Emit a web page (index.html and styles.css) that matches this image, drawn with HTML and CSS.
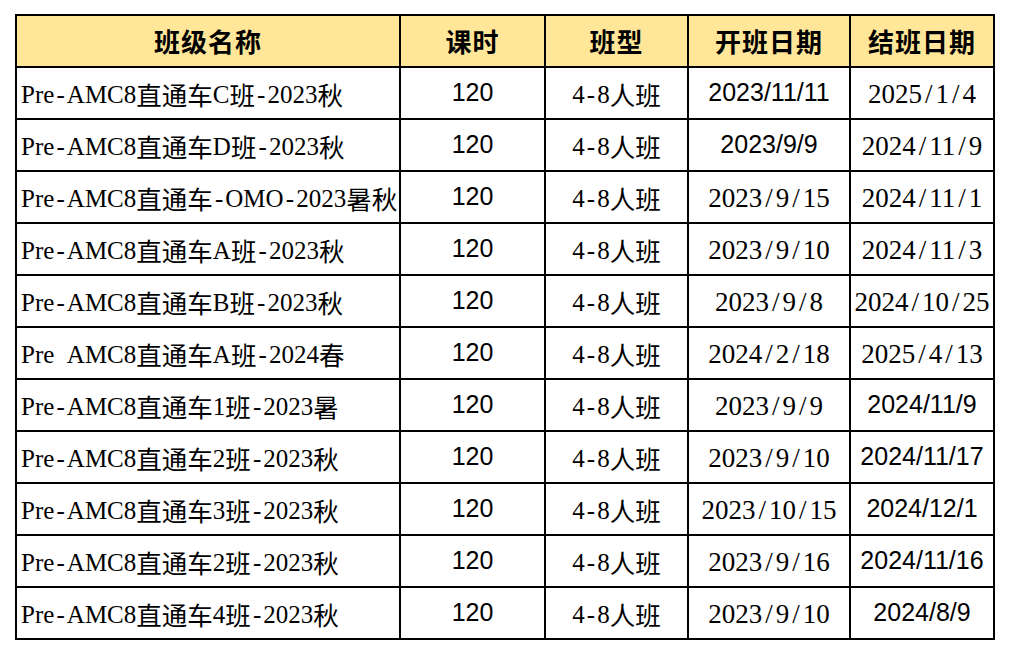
FILE: index.html
```html
<!DOCTYPE html>
<html lang="zh-CN">
<head>
<meta charset="utf-8">
<title>班级列表</title>
<link rel="stylesheet" href="styles.css">
</head>
<body>
<div class="sheet">
  <div class="cell head">班级名称</div>
  <div class="cell head">课时</div>
  <div class="cell head">班型</div>
  <div class="cell head">开班日期</div>
  <div class="cell head">结班日期</div>

  <div class="cell name">Pre<span class="hy">-</span>AMC8<span class="cj">直通车</span>C<span class="cj">班</span><span class="hy">-</span>2023<span class="cj">秋</span></div>
  <div class="cell sans">120</div>
  <div class="cell mono">4<span class="hy">-</span>8<span class="cj">人班</span></div>
  <div class="cell sans">2023/11/11</div>
  <div class="cell serif">2025<span class="sl">/</span>1<span class="sl">/</span>4</div>

  <div class="cell name">Pre<span class="hy">-</span>AMC8<span class="cj">直通车</span>D<span class="cj">班</span><span class="hy">-</span>2023<span class="cj">秋</span></div>
  <div class="cell sans">120</div>
  <div class="cell mono">4<span class="hy">-</span>8<span class="cj">人班</span></div>
  <div class="cell sans">2023/9/9</div>
  <div class="cell serif">2024<span class="sl">/</span>11<span class="sl">/</span>9</div>

  <div class="cell name">Pre<span class="hy">-</span>AMC8<span class="cj">直通车</span><span class="hy">-</span>OMO<span class="hy">-</span>2023<span class="cj">暑秋</span></div>
  <div class="cell sans">120</div>
  <div class="cell mono">4<span class="hy">-</span>8<span class="cj">人班</span></div>
  <div class="cell serif">2023<span class="sl">/</span>9<span class="sl">/</span>15</div>
  <div class="cell serif">2024<span class="sl">/</span>11<span class="sl">/</span>1</div>

  <div class="cell name">Pre<span class="hy">-</span>AMC8<span class="cj">直通车</span>A<span class="cj">班</span><span class="hy">-</span>2023<span class="cj">秋</span></div>
  <div class="cell sans">120</div>
  <div class="cell mono">4<span class="hy">-</span>8<span class="cj">人班</span></div>
  <div class="cell serif">2023<span class="sl">/</span>9<span class="sl">/</span>10</div>
  <div class="cell serif">2024<span class="sl">/</span>11<span class="sl">/</span>3</div>

  <div class="cell name">Pre<span class="hy">-</span>AMC8<span class="cj">直通车</span>B<span class="cj">班</span><span class="hy">-</span>2023<span class="cj">秋</span></div>
  <div class="cell sans">120</div>
  <div class="cell mono">4<span class="hy">-</span>8<span class="cj">人班</span></div>
  <div class="cell serif">2023<span class="sl">/</span>9<span class="sl">/</span>8</div>
  <div class="cell serif">2024<span class="sl">/</span>10<span class="sl">/</span>25</div>

  <div class="cell name">Pre<span class="hy"> </span>AMC8<span class="cj">直通车</span>A<span class="cj">班</span><span class="hy">-</span>2024<span class="cj">春</span></div>
  <div class="cell sans">120</div>
  <div class="cell mono">4<span class="hy">-</span>8<span class="cj">人班</span></div>
  <div class="cell serif">2024<span class="sl">/</span>2<span class="sl">/</span>18</div>
  <div class="cell serif">2025<span class="sl">/</span>4<span class="sl">/</span>13</div>

  <div class="cell name">Pre<span class="hy">-</span>AMC8<span class="cj">直通车</span>1<span class="cj">班</span><span class="hy">-</span>2023<span class="cj">暑</span></div>
  <div class="cell sans">120</div>
  <div class="cell mono">4<span class="hy">-</span>8<span class="cj">人班</span></div>
  <div class="cell serif">2023<span class="sl">/</span>9<span class="sl">/</span>9</div>
  <div class="cell sans">2024/11/9</div>

  <div class="cell name">Pre<span class="hy">-</span>AMC8<span class="cj">直通车</span>2<span class="cj">班</span><span class="hy">-</span>2023<span class="cj">秋</span></div>
  <div class="cell sans">120</div>
  <div class="cell mono">4<span class="hy">-</span>8<span class="cj">人班</span></div>
  <div class="cell serif">2023<span class="sl">/</span>9<span class="sl">/</span>10</div>
  <div class="cell sans">2024/11/17</div>

  <div class="cell name">Pre<span class="hy">-</span>AMC8<span class="cj">直通车</span>3<span class="cj">班</span><span class="hy">-</span>2023<span class="cj">秋</span></div>
  <div class="cell sans">120</div>
  <div class="cell mono">4<span class="hy">-</span>8<span class="cj">人班</span></div>
  <div class="cell serif">2023<span class="sl">/</span>10<span class="sl">/</span>15</div>
  <div class="cell sans">2024/12/1</div>

  <div class="cell name">Pre<span class="hy">-</span>AMC8<span class="cj">直通车</span>2<span class="cj">班</span><span class="hy">-</span>2023<span class="cj">秋</span></div>
  <div class="cell sans">120</div>
  <div class="cell mono">4<span class="hy">-</span>8<span class="cj">人班</span></div>
  <div class="cell serif">2023<span class="sl">/</span>9<span class="sl">/</span>16</div>
  <div class="cell sans">2024/11/16</div>

  <div class="cell name">Pre<span class="hy">-</span>AMC8<span class="cj">直通车</span>4<span class="cj">班</span><span class="hy">-</span>2023<span class="cj">秋</span></div>
  <div class="cell sans">120</div>
  <div class="cell mono">4<span class="hy">-</span>8<span class="cj">人班</span></div>
  <div class="cell serif">2023<span class="sl">/</span>9<span class="sl">/</span>10</div>
  <div class="cell sans">2024/8/9</div>
</div>
</body>
</html>
```
FILE: styles.css
```css
html, body {
  margin: 0;
  padding: 0;
  background: #ffffff;
}
body {
  padding: 14px 0 0 15px;
}
.sheet {
  display: grid;
  grid-template-columns: 382px 143px 141px 160px 142px;
  grid-auto-rows: 50px;
  gap: 2px;
  padding: 2px;
  background: #000000;
  width: 976px;
}
.cell {
  background: #ffffff;
  display: flex;
  align-items: center;
  justify-content: center;
  line-height: 1;
  color: #000000;
  white-space: nowrap;
  overflow: hidden;
  padding-top: 2px;
  box-sizing: border-box;
}
.head {
  background: #ffe699;
  font-family: "Noto Sans CJK SC", sans-serif;
  font-weight: 700;
  font-size: 26px;
  letter-spacing: 1px;
  padding-top: 0;
}
.name, .mono {
  font-family: "Liberation Serif", "Noto Sans CJK SC", serif;
  font-size: 25px;
}
.name {
  justify-content: flex-start;
  padding-left: 4px;
}
.cj {
  font-family: "Noto Sans CJK SC", sans-serif;
  font-size: 25.5px;
}
.hy {
  display: inline-block;
  width: 12.5px;
  text-align: center;
}
.sans {
  font-family: "Liberation Sans", Arial, sans-serif;
  font-size: 25px;
  padding-top: 0;
  padding-bottom: 2px;
}
.serif {
  font-family: "Liberation Serif", "Times New Roman", serif;
  font-size: 27px;
}
.sl {
  display: inline-block;
  width: 13.5px;
  text-align: center;
}
```
